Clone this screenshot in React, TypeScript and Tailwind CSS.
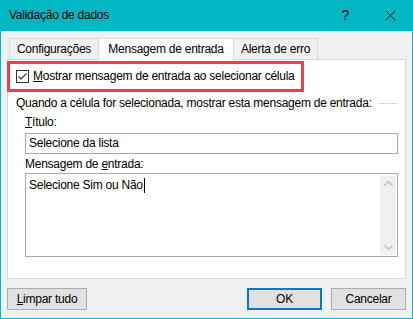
import React from "react";

const font = { fontFamily: '"Liberation Sans", Arial, sans-serif' };

function Tab({ label, active }: { label: string; active?: boolean }) {
  return active ? (
    <div className="relative z-10 -mb-px -ml-px h-[22px] w-[136px] bg-white border-x border-t border-[#d9d9d9] flex items-center justify-center">
      {label}
    </div>
  ) : (
    <div className="-ml-px first:ml-0 h-[21px] bg-[#f0f0f0] border-x border-t border-[#d9d9d9] flex items-center justify-center">
      {label}
    </div>
  );
}

function Check() {
  return (
    <div className="w-[13px] h-[13px] border border-[#333333] bg-white flex items-center justify-center">
      <svg width="11" height="11" viewBox="0 0 11 11">
        <polyline points="1.5,5.5 4,8 9.5,2.5" fill="none" stroke="#333333" strokeWidth="1.1" />
      </svg>
    </div>
  );
}

function Button({ children, primary, w }: { children: React.ReactNode; primary?: boolean; w: string }) {
  return (
    <div
      className={`${w} h-[22px] bg-[#e1e1e1] flex items-center justify-center ${
        primary ? "border-2 border-[#0078d7]" : "border border-[#adadad]"
      }`}
    >
      {children}
    </div>
  );
}

export default function App() {
  return (
    <div
      className="w-[413px] h-[319px] flex flex-col text-[12px] text-black leading-[15px] tracking-[-0.25px] whitespace-nowrap"
      style={font}
    >
      <div className="h-[31px] shrink-0 bg-[#00b7c3] flex items-center pl-[9px] pr-[17px]">
        <span className="flex-1 text-[12px]">Validação de dados</span>
        <span className="text-[14px] mr-[36px]">?</span>
        <svg width="11" height="11" viewBox="0 0 11 11">
          <path d="M0.5 0.5 L10.5 10.5 M10.5 0.5 L0.5 10.5" stroke="#111" strokeWidth="1" />
        </svg>
      </div>

      <div className="flex-1 flex flex-col bg-[#f0f0f0] border-x border-b border-[#00b7c3] px-[6px]">
        <div className="mt-[7px] ml-[2px] flex items-end h-[21px]">
          <div className="w-[90px]"><Tab label="Configurações" /></div>
          <Tab label="Mensagem de entrada" active />
          <div className="w-[85px] -ml-px"><Tab label="Alerta de erro" /></div>
        </div>

        <div className="h-[220px] bg-white border border-[#d9d9d9] flex flex-col">
          <div className="-ml-px mt-[1px] w-[297px] h-[31px] border-[3px] border-[#ef3e47] flex items-center pl-[6px] gap-[4px]">
            <Check />
            <span>
              <span className="underline">M</span>ostrar mensagem de entrada ao selecionar célula
            </span>
          </div>

          <div className="mt-[4px] pl-[8px] pr-[7px] flex items-center">
            <span>Quando a célula for selecionada, mostrar esta mensagem de entrada:</span>
            <div className="flex-1 ml-[6px] h-px bg-[#d9d9d9]" />
          </div>

          <div className="mt-[4px] pl-[17px] pr-[7px] flex flex-col">
            <span>
              <span className="underline">T</span>ítulo:
            </span>
            <div className="mt-[3px] h-[21px] border border-[#ababab] flex items-center px-[3px]">
              Selecione da lista
            </div>
            <span className="mt-[3px]">
              Mensagem de <span className="underline">e</span>ntrada:
            </span>
            <div className="mt-[1px] h-[84px] border border-[#ababab] flex pl-[3px] pt-[2px] pr-[1px] pb-[1px]">
              <div className="flex-1 flex items-start pt-[2px]">
                <span>Selecione Sim ou Não</span>
                <span className="w-px h-[15px] bg-black ml-[1px]" />
              </div>
              <div className="w-[16px] bg-[#f0f0f0] flex flex-col items-center justify-between py-[5px]">
                <svg width="9" height="5" viewBox="0 0 9 5">
                  <polyline points="0.5,4.5 4.5,0.5 8.5,4.5" fill="none" stroke="#c2c2c2" strokeWidth="1.5" />
                </svg>
                <svg width="9" height="5" viewBox="0 0 9 5">
                  <polyline points="0.5,0.5 4.5,4.5 8.5,0.5" fill="none" stroke="#c2c2c2" strokeWidth="1.5" />
                </svg>
              </div>
            </div>
          </div>
        </div>

        <div className="mt-[9px] flex items-center">
          <Button w="w-[80px]">
            <span>
              <span className="underline">L</span>impar tudo
            </span>
          </Button>
          <div className="flex-1" />
          <Button w="w-[75px]" primary>
            OK
          </Button>
          <div className="w-[9px]" />
          <Button w="w-[75px]">Cancelar</Button>
        </div>
      </div>
    </div>
  );
}
